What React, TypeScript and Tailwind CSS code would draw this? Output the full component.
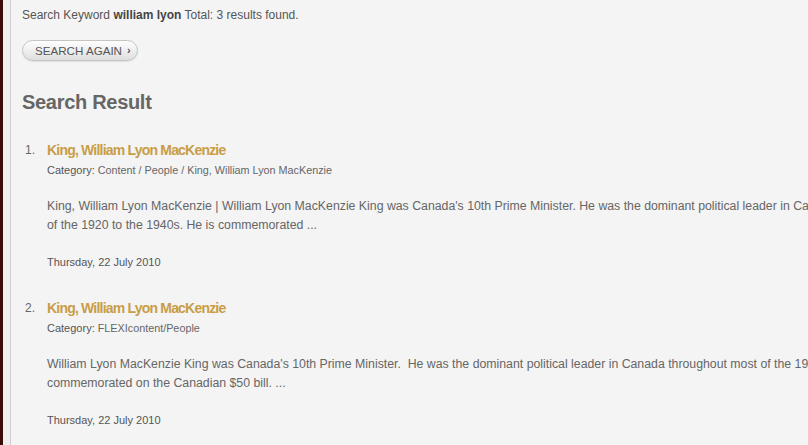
import React from "react";

const items = [
  {
    n: "1.",
    title: "King, William Lyon MacKenzie",
    cat: "Content / People / King, William Lyon MacKenzie",
    l1: "King, William Lyon MacKenzie | William Lyon MacKenzie King was Canada's 10th Prime Minister. He was the dominant political leader in Canada throughout most",
    l2: "of the 1920 to the 1940s. He is commemorated ...",
    date: "Thursday, 22 July 2010",
  },
  {
    n: "2.",
    title: "King, William Lyon MacKenzie",
    cat: "FLEXIcontent/People",
    l1: "William Lyon MacKenzie King was Canada's 10th Prime Minister.\u00a0 He was the dominant political leader in Canada throughout most of the 1920 to the 1940s. He is",
    l2: "commemorated on the Canadian $50 bill. ...",
    date: "Thursday, 22 July 2010",
  },
];

export default function App() {
  return (
    <div
      className="flex h-[445px] w-[808px] overflow-hidden bg-[#f4f4f4] text-[#555]"
      style={{ fontFamily: '"Liberation Sans", Arial, sans-serif' }}
    >
      <div className="w-[3px] shrink-0 bg-[#3e0b0b]" />
      <div className="w-[8px] shrink-0 bg-[#efefef] border-r border-[#cfcfcf]" />
      <div className="flex-1 min-w-0 overflow-hidden pl-[11px] pt-[7px]">
        <p className="text-[12px] leading-[16px] text-[#555] whitespace-nowrap">
          Search Keyword <b className="text-[#444]">william lyon</b> Total: 3 results found.
        </p>
        <button className="mt-[17px] flex h-[21px] w-[116px] items-center rounded-full border border-[#c4c4c4] bg-gradient-to-b from-[#ffffff] to-[#dedede] pl-[12px] text-[11.6px] text-[#555] shadow-[0_1px_1px_rgba(0,0,0,0.08)]">
          SEARCH AGAIN <span className="ml-[5px] text-[11px] font-bold">›</span>
        </button>
        <h1 className="mt-[29px] text-[20px] font-bold leading-[24px] text-[#666] tracking-[-0.3px]">
          Search Result
        </h1>
        <ol className="mt-[28px]">
          {items.map((it, i) => (
            <li key={i} className="flex h-[158px]">
              <span className="w-[25px] pl-[3px] text-[12px] leading-[16px] text-[#666]">{it.n}</span>
              <div className="min-w-0 flex-1">
                <div className="text-[14px] font-bold leading-[16px] text-[#c89d47] tracking-[-0.8px] whitespace-nowrap">
                  {it.title}
                </div>
                <div className="mt-[5px] text-[11px] leading-[14px] text-[#555] whitespace-nowrap">
                  Category: <span className="text-[10.8px] text-[#666]">{it.cat}</span>
                </div>
                <div className="mt-[20px] text-[12.3px] leading-[19px] text-[#666] whitespace-nowrap">
                  <div>{it.l1}</div>
                  <div>{it.l2}</div>
                </div>
                <div className="mt-[20px] text-[11px] leading-[14px] text-[#555]">{it.date}</div>
              </div>
            </li>
          ))}
        </ol>
      </div>
    </div>
  );
}
